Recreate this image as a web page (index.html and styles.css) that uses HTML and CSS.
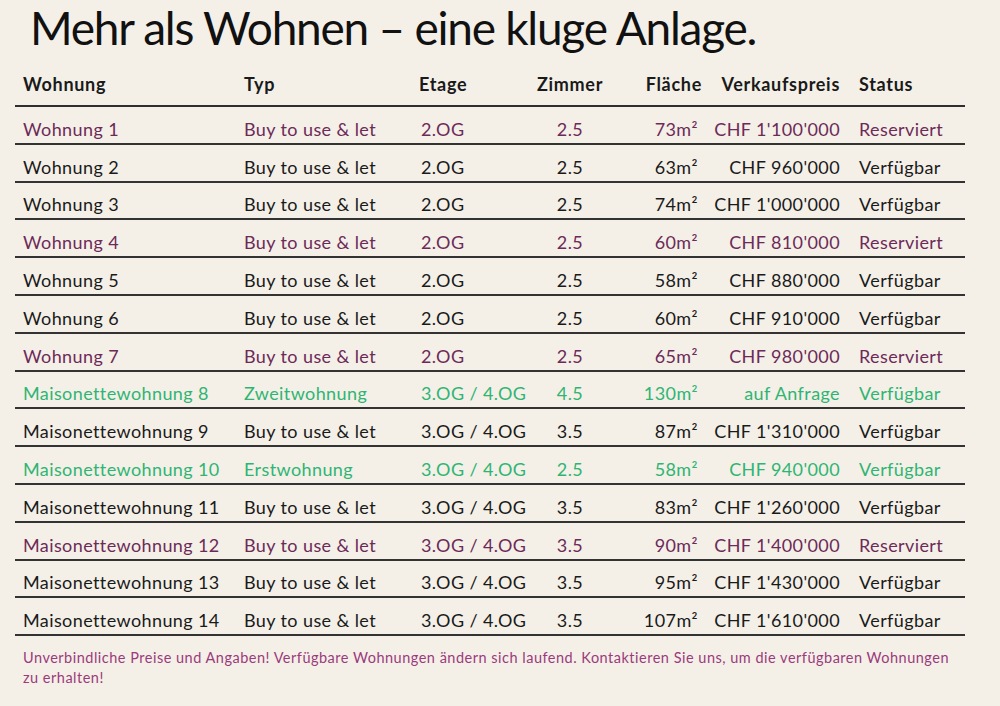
FILE: index.html
```html
<!DOCTYPE html>
<html lang="de">
<head>
<meta charset="utf-8">
<title>Mehr als Wohnen</title>
<link rel="stylesheet" href="styles.css">
</head>
<body>
<main class="page">
  <h1 class="title">Mehr als Wohnen – eine kluge Anlage.</h1>
  <table class="units">
    <colgroup>
      <col class="c-name"><col class="c-typ"><col class="c-etage"><col class="c-zimmer"><col class="c-flaeche"><col class="c-preis"><col class="c-status">
    </colgroup>
    <thead>
      <tr>
        <th class="l name">Wohnung</th>
        <th class="l">Typ</th>
        <th class="l">Etage</th>
        <th class="c">Zimmer</th>
        <th class="r area-h">Fläche</th>
        <th class="r price">Verkaufspreis</th>
        <th class="l status">Status</th>
      </tr>
    </thead>
    <tbody>
      <tr class="res"><td class="l name">Wohnung 1</td><td class="l">Buy to use &amp; let</td><td class="l etage">2.OG</td><td class="c">2.5</td><td class="r area">73m²</td><td class="r price">CHF 1'100'000</td><td class="l status">Reserviert</td></tr>
      <tr><td class="l name">Wohnung 2</td><td class="l">Buy to use &amp; let</td><td class="l etage">2.OG</td><td class="c">2.5</td><td class="r area">63m²</td><td class="r price">CHF 960'000</td><td class="l status">Verfügbar</td></tr>
      <tr><td class="l name">Wohnung 3</td><td class="l">Buy to use &amp; let</td><td class="l etage">2.OG</td><td class="c">2.5</td><td class="r area">74m²</td><td class="r price">CHF 1'000'000</td><td class="l status">Verfügbar</td></tr>
      <tr class="res"><td class="l name">Wohnung 4</td><td class="l">Buy to use &amp; let</td><td class="l etage">2.OG</td><td class="c">2.5</td><td class="r area">60m²</td><td class="r price">CHF 810'000</td><td class="l status">Reserviert</td></tr>
      <tr><td class="l name">Wohnung 5</td><td class="l">Buy to use &amp; let</td><td class="l etage">2.OG</td><td class="c">2.5</td><td class="r area">58m²</td><td class="r price">CHF 880'000</td><td class="l status">Verfügbar</td></tr>
      <tr><td class="l name">Wohnung 6</td><td class="l">Buy to use &amp; let</td><td class="l etage">2.OG</td><td class="c">2.5</td><td class="r area">60m²</td><td class="r price">CHF 910'000</td><td class="l status">Verfügbar</td></tr>
      <tr class="res"><td class="l name">Wohnung 7</td><td class="l">Buy to use &amp; let</td><td class="l etage">2.OG</td><td class="c">2.5</td><td class="r area">65m²</td><td class="r price">CHF 980'000</td><td class="l status">Reserviert</td></tr>
      <tr class="own"><td class="l name">Maisonettewohnung 8</td><td class="l">Zweitwohnung</td><td class="l etage">3.OG / 4.OG</td><td class="c">4.5</td><td class="r area">130m²</td><td class="r price">auf Anfrage</td><td class="l status">Verfügbar</td></tr>
      <tr><td class="l name">Maisonettewohnung 9</td><td class="l">Buy to use &amp; let</td><td class="l etage">3.OG / 4.OG</td><td class="c">3.5</td><td class="r area">87m²</td><td class="r price">CHF 1'310'000</td><td class="l status">Verfügbar</td></tr>
      <tr class="own"><td class="l name">Maisonettewohnung 10</td><td class="l">Erstwohnung</td><td class="l etage">3.OG / 4.OG</td><td class="c">2.5</td><td class="r area">58m²</td><td class="r price">CHF 940'000</td><td class="l status">Verfügbar</td></tr>
      <tr><td class="l name">Maisonettewohnung 11</td><td class="l">Buy to use &amp; let</td><td class="l etage">3.OG / 4.OG</td><td class="c">3.5</td><td class="r area">83m²</td><td class="r price">CHF 1'260'000</td><td class="l status">Verfügbar</td></tr>
      <tr class="res"><td class="l name">Maisonettewohnung 12</td><td class="l">Buy to use &amp; let</td><td class="l etage">3.OG / 4.OG</td><td class="c">3.5</td><td class="r area">90m²</td><td class="r price">CHF 1'400'000</td><td class="l status">Reserviert</td></tr>
      <tr><td class="l name">Maisonettewohnung 13</td><td class="l">Buy to use &amp; let</td><td class="l etage">3.OG / 4.OG</td><td class="c">3.5</td><td class="r area">95m²</td><td class="r price">CHF 1'430'000</td><td class="l status">Verfügbar</td></tr>
      <tr><td class="l name">Maisonettewohnung 14</td><td class="l">Buy to use &amp; let</td><td class="l etage">3.OG / 4.OG</td><td class="c">3.5</td><td class="r area">107m²</td><td class="r price">CHF 1'610'000</td><td class="l status">Verfügbar</td></tr>
    </tbody>
  </table>
  <p class="note">Unverbindliche Preise und Angaben! Verfügbare Wohnungen ändern sich laufend. Kontaktieren Sie uns, um die verfügbaren Wohnungen zu erhalten!</p>
</main>
</body>
</html>
```

FILE: styles.css
```css
html, body {
  margin: 0;
  padding: 0;
  background: #f4f0e8;
}

body {
  font-family: Lato, "Noto Sans", "Liberation Sans", sans-serif;
  color: #1a1a1a;
  width: 1000px;
  height: 706px;
  overflow: hidden;
}

.page {
  padding: 0 0 0 15px;
}

.title {
  margin: 0 0 0 15px;
  font-weight: 400;
  font-size: 46px;
  letter-spacing: -1.25px;
  line-height: 56px;
  color: #111;
}

.units {
  width: 950px;
  border-collapse: collapse;
  table-layout: fixed;
  margin-top: 6px;
}

.c-name { width: 221px; }
.c-typ { width: 175px; }
.c-etage { width: 119px; }
.c-zimmer { width: 80px; }
.c-flaeche { width: 96px; }
.c-preis { width: 144px; }
.c-status { width: 115px; }

.units th,
.units td {
  padding: 0;
  white-space: nowrap;
  font-size: 18px;
  letter-spacing: 0.4px;
}

.units th {
  font-weight: 700;
  letter-spacing: 0.7px;
  height: 43px;
  vertical-align: middle;
  border-bottom: 2px solid #2e2e2e;
}

.units td {
  height: 27.8px;
  padding-top: 8px;
  vertical-align: middle;
  border-bottom: 2px solid #333;
}

.l { text-align: left; padding-left: 8px !important; }
.c { text-align: center; }
.r { text-align: right; }
.l.status { padding-left: 9px !important; }
.r.area { padding-right: 8px !important; }
.r.area-h { padding-right: 4px !important; }
.r.price { padding-right: 10px !important; }
td.etage { padding-left: 10px !important; }

.res td { color: #6d2a58; }
.own td { color: #2fb573; }

.note {
  margin: 12px 0 0 8px;
  width: 934px;
  font-size: 14.5px;
  letter-spacing: 0.5px;
  line-height: 20px;
  color: #9b3a7c;
}
```
